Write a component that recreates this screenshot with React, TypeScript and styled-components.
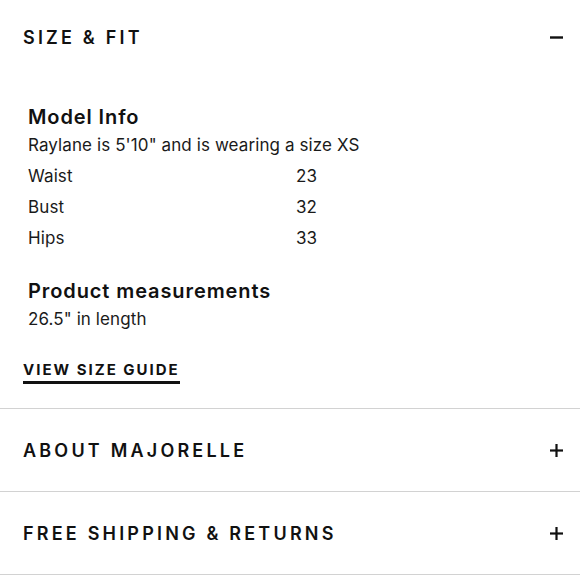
import React from "react";
import styled, { createGlobalStyle } from "styled-components";

const Global = createGlobalStyle`
  html, body { margin: 0; padding: 0; background: #fff; }
  body { font-family: Inter, "Noto Sans", sans-serif; color: #111; -webkit-font-smoothing: antialiased; }
`;

const Page = styled.div`
  width: 580px;
  margin-top: -4px;
`;

const Section = styled.section`
  border-bottom: 1px solid #d2d2d2;
`;

const Header = styled.div`
  height: 82px;
  display: flex;
  align-items: center;
  justify-content: space-between;
  padding: 0 17px 0 23px;
`;

const HeaderTitle = styled.h2`
  margin: 0;
  font-size: 18px;
  font-weight: 600;
  letter-spacing: 3.2px;
  text-transform: uppercase;
  color: #111;
`;

const Icon = styled.svg`
  width: 13px;
  height: 13px;
  display: block;
`;

const Content = styled.div`
  padding: 26px 0 24px 28px;
`;

const Block = styled.div<{ $gap?: number }>`
  margin-top: ${(p) => p.$gap ?? 0}px;
`;

const BlockTitle = styled.h3`
  margin: 0;
  font-size: 20px;
  line-height: 26px;
  font-weight: 600;
  letter-spacing: 0.9px;
  color: #111;
`;

const Line = styled.p`
  margin: 0;
  font-size: 17px;
  line-height: 31px;
  font-weight: 400;
  letter-spacing: 0.1px;
  color: #1a1a1a;
`;

const Row = styled.div`
  display: grid;
  grid-template-columns: 268px 1fr;
  font-size: 17px;
  line-height: 31px;
  letter-spacing: 0.1px;
  color: #1a1a1a;
`;

const GuideLink = styled.a`
  display: inline-block;
  margin-top: 26px;
  margin-left: -5px;
  font-size: 15px;
  font-weight: 700;
  letter-spacing: 2px;
  line-height: 18px;
  text-transform: uppercase;
  color: #111;
  text-decoration: none;
  border-bottom: 3px solid #111;
  padding-bottom: 2px;
`;

const Minus = () => (
  <Icon viewBox="0 0 13 13">
    <rect x="0" y="5.3" width="13" height="2.4" fill="#111" />
  </Icon>
);

const Plus = () => (
  <Icon viewBox="0 0 13 13">
    <rect x="0" y="5.4" width="13" height="2.2" fill="#111" />
    <rect x="5.4" y="0" width="2.2" height="13" fill="#111" />
  </Icon>
);

const measurements = [
  { label: "Waist", value: "23" },
  { label: "Bust", value: "32" },
  { label: "Hips", value: "33" },
];

export default function App() {
  return (
    <Page>
      <Global />
      <Section>
        <Header>
          <HeaderTitle>Size &amp; Fit</HeaderTitle>
          <Minus />
        </Header>
        <Content>
          <Block>
            <BlockTitle>Model Info</BlockTitle>
            <Line>Raylane is 5'10" and is wearing a size XS</Line>
            {measurements.map((m) => (
              <Row key={m.label}>
                <span>{m.label}</span>
                <span>{m.value}</span>
              </Row>
            ))}
          </Block>
          <Block $gap={24}>
            <BlockTitle>Product measurements</BlockTitle>
            <Line>26.5" in length</Line>
          </Block>
          <GuideLink href="#">View size guide</GuideLink>
        </Content>
      </Section>
      <Section>
        <Header>
          <HeaderTitle>About Majorelle</HeaderTitle>
          <Plus />
        </Header>
      </Section>
      <Section>
        <Header>
          <HeaderTitle>Free Shipping &amp; Returns</HeaderTitle>
          <Plus />
        </Header>
      </Section>
    </Page>
  );
}
